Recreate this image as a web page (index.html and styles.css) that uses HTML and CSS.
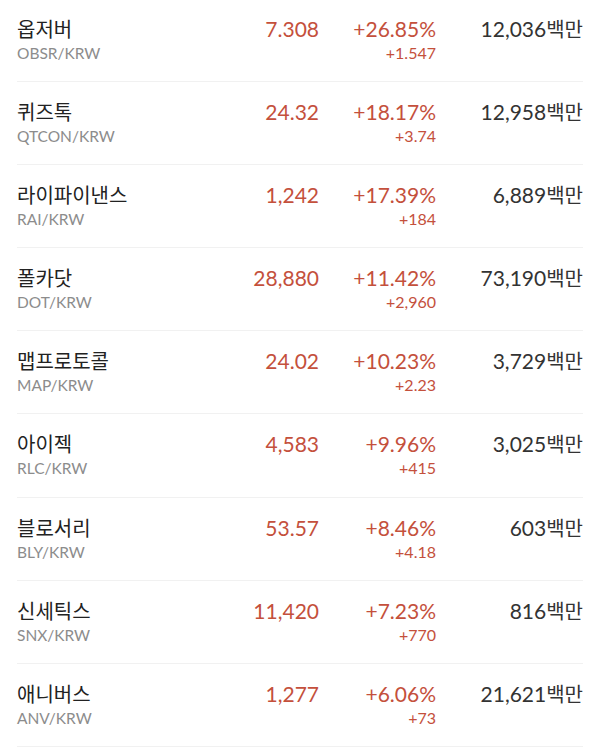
FILE: index.html
```html
<!DOCTYPE html>
<html lang="ko">
<head>
<meta charset="utf-8">
<link rel="stylesheet" href="styles.css">
</head>
<body>
<ul class="list">
  <li class="row"><div class="coin"><div class="name">옵저버</div><div class="ticker">OBSR/KRW</div></div><div class="price">7.308</div><div class="change"><div class="pct">+26.85%</div><div class="amt">+1.547</div></div><div class="vol">12,036<span class="unit">백만</span></div></li>
  <li class="row"><div class="coin"><div class="name">퀴즈톡</div><div class="ticker">QTCON/KRW</div></div><div class="price">24.32</div><div class="change"><div class="pct">+18.17%</div><div class="amt">+3.74</div></div><div class="vol">12,958<span class="unit">백만</span></div></li>
  <li class="row"><div class="coin"><div class="name">라이파이낸스</div><div class="ticker">RAI/KRW</div></div><div class="price">1,242</div><div class="change"><div class="pct">+17.39%</div><div class="amt">+184</div></div><div class="vol">6,889<span class="unit">백만</span></div></li>
  <li class="row"><div class="coin"><div class="name">폴카닷</div><div class="ticker">DOT/KRW</div></div><div class="price">28,880</div><div class="change"><div class="pct">+11.42%</div><div class="amt">+2,960</div></div><div class="vol">73,190<span class="unit">백만</span></div></li>
  <li class="row"><div class="coin"><div class="name">맵프로토콜</div><div class="ticker">MAP/KRW</div></div><div class="price">24.02</div><div class="change"><div class="pct">+10.23%</div><div class="amt">+2.23</div></div><div class="vol">3,729<span class="unit">백만</span></div></li>
  <li class="row"><div class="coin"><div class="name">아이젝</div><div class="ticker">RLC/KRW</div></div><div class="price">4,583</div><div class="change"><div class="pct">+9.96%</div><div class="amt">+415</div></div><div class="vol">3,025<span class="unit">백만</span></div></li>
  <li class="row"><div class="coin"><div class="name">블로서리</div><div class="ticker">BLY/KRW</div></div><div class="price">53.57</div><div class="change"><div class="pct">+8.46%</div><div class="amt">+4.18</div></div><div class="vol">603<span class="unit">백만</span></div></li>
  <li class="row"><div class="coin"><div class="name">신세틱스</div><div class="ticker">SNX/KRW</div></div><div class="price">11,420</div><div class="change"><div class="pct">+7.23%</div><div class="amt">+770</div></div><div class="vol">816<span class="unit">백만</span></div></li>
  <li class="row"><div class="coin"><div class="name">애니버스</div><div class="ticker">ANV/KRW</div></div><div class="price">1,277</div><div class="change"><div class="pct">+6.06%</div><div class="amt">+73</div></div><div class="vol">21,621<span class="unit">백만</span></div></li>
</ul>
</body>
</html>
```
FILE: styles.css
```css
html, body {
  margin: 0;
  padding: 0;
  background: #ffffff;
}
body {
  font-family: Lato, "Noto Sans CJK KR", sans-serif;
  overflow: hidden;
}
.list {
  list-style: none;
  margin: -1px 17px 0;
  padding: 0;
}
.row {
  display: grid;
  grid-template-columns: 1fr 110px 117px 147px;
  height: 82.1px;
  box-sizing: content-box;
  border-bottom: 1px solid #f1f1f1;
}
.coin {
  padding-top: 17px;
}
.name {
  font-family: "Noto Sans CJK KR", sans-serif;
  font-size: 20px;
  line-height: 26px;
  color: #222222;
}
.ticker {
  margin-top: 1px;
  font-size: 15.5px;
  line-height: 20px;
  color: #8c8c8c;
}
.price, .change, .vol {
  padding-top: 17px;
  text-align: right;
}
.price, .pct {
  font-size: 21px;
  line-height: 26px;
  color: #c4503c;
}
.amt {
  margin-top: 1px;
  font-size: 16px;
  line-height: 20px;
  color: #c4503c;
}
.vol {
  font-size: 21px;
  line-height: 26px;
  color: #333333;
}
.unit {
  font-family: "Noto Sans CJK KR", sans-serif;
  font-size: 20px;
}
```
